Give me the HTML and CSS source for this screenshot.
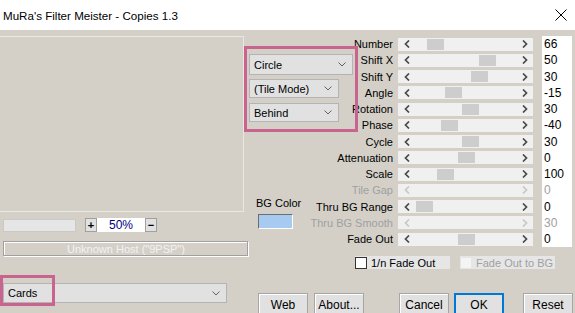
FILE: index.html
```html
<!DOCTYPE html>
<html lang="en">
<head>
    <meta charset="UTF-8">
    <title>MuRa's Filter Meister - Copies 1.3</title>
    <link rel="stylesheet" href="styles.css">
</head>
<body>
    <div class="window">
        <div class="titlebar">
            <span class="title">MuRa's Filter Meister - Copies 1.3</span>
            <svg class="close" viewBox="0 0 12 12"><path d="M0.5 0.5L11.5 11.5M11.5 0.5L0.5 11.5"/></svg>
        </div>

        <div class="client">
            <div class="upper">
                <!-- preview + zoom -->
                <div class="left">
                    <div class="preview"></div>
                    <div class="zoom-row">
                        <div class="progress"></div>
                        <span class="zbtn">+</span>
                        <span class="zoom-val">50%</span>
                        <span class="zbtn">&minus;</span>
                    </div>
                    <div class="host">Unknown Host ("9PSP")</div>
                </div>

                <!-- mode combos -->
                <div class="mid">
                    <div class="combo combo-wide">Circle<svg class="drop" viewBox="0 0 8 5"><path d="M0.5 0.5L4 4L7.5 0.5"/></svg></div>
                    <div class="combo combo-tile">(Tile Mode)<svg class="drop" viewBox="0 0 8 5"><path d="M0.5 0.5L4 4L7.5 0.5"/></svg></div>
                    <div class="combo combo-behind">Behind<svg class="drop" viewBox="0 0 8 5"><path d="M0.5 0.5L4 4L7.5 0.5"/></svg></div>
                    <div class="bg-color">
                        <span class="bg-label">BG Color</span>
                        <div class="swatch"></div>
                    </div>
                </div>

                <!-- sliders -->
                <div class="right">
                    <div class="sliders">
                        <div class="row">
                            <span class="lbl">Number</span>
                            <div class="bar"><span class="arr"><svg class="chev" viewBox="0 0 6 8"><path d="M5 0.5L1.5 4L5 7.5"/></svg></span><div class="track"><span class="thumb" style="margin-left:12px"></span></div><span class="arr"><svg class="chev" viewBox="0 0 6 8"><path d="M1 0.5L4.5 4L1 7.5"/></svg></span></div>
                            <span class="field">66</span>
                        </div>
                        <div class="row">
                            <span class="lbl">Shift X</span>
                            <div class="bar"><span class="arr"><svg class="chev" viewBox="0 0 6 8"><path d="M5 0.5L1.5 4L5 7.5"/></svg></span><div class="track"><span class="thumb" style="margin-left:64px"></span></div><span class="arr"><svg class="chev" viewBox="0 0 6 8"><path d="M1 0.5L4.5 4L1 7.5"/></svg></span></div>
                            <span class="field">50</span>
                        </div>
                        <div class="row">
                            <span class="lbl">Shift Y</span>
                            <div class="bar"><span class="arr"><svg class="chev" viewBox="0 0 6 8"><path d="M5 0.5L1.5 4L5 7.5"/></svg></span><div class="track"><span class="thumb" style="margin-left:56px"></span></div><span class="arr"><svg class="chev" viewBox="0 0 6 8"><path d="M1 0.5L4.5 4L1 7.5"/></svg></span></div>
                            <span class="field">30</span>
                        </div>
                        <div class="row">
                            <span class="lbl">Angle</span>
                            <div class="bar"><span class="arr"><svg class="chev" viewBox="0 0 6 8"><path d="M5 0.5L1.5 4L5 7.5"/></svg></span><div class="track"><span class="thumb" style="margin-left:30px"></span></div><span class="arr"><svg class="chev" viewBox="0 0 6 8"><path d="M1 0.5L4.5 4L1 7.5"/></svg></span></div>
                            <span class="field">-15</span>
                        </div>
                        <div class="row">
                            <span class="lbl">Rotation</span>
                            <div class="bar"><span class="arr"><svg class="chev" viewBox="0 0 6 8"><path d="M5 0.5L1.5 4L5 7.5"/></svg></span><div class="track"><span class="thumb" style="margin-left:47px"></span></div><span class="arr"><svg class="chev" viewBox="0 0 6 8"><path d="M1 0.5L4.5 4L1 7.5"/></svg></span></div>
                            <span class="field">30</span>
                        </div>
                        <div class="row">
                            <span class="lbl">Phase</span>
                            <div class="bar"><span class="arr"><svg class="chev" viewBox="0 0 6 8"><path d="M5 0.5L1.5 4L5 7.5"/></svg></span><div class="track"><span class="thumb" style="margin-left:26px"></span></div><span class="arr"><svg class="chev" viewBox="0 0 6 8"><path d="M1 0.5L4.5 4L1 7.5"/></svg></span></div>
                            <span class="field">-40</span>
                        </div>
                        <div class="row">
                            <span class="lbl">Cycle</span>
                            <div class="bar"><span class="arr"><svg class="chev" viewBox="0 0 6 8"><path d="M5 0.5L1.5 4L5 7.5"/></svg></span><div class="track"><span class="thumb" style="margin-left:47px"></span></div><span class="arr"><svg class="chev" viewBox="0 0 6 8"><path d="M1 0.5L4.5 4L1 7.5"/></svg></span></div>
                            <span class="field">30</span>
                        </div>
                        <div class="row">
                            <span class="lbl">Attenuation</span>
                            <div class="bar"><span class="arr"><svg class="chev" viewBox="0 0 6 8"><path d="M5 0.5L1.5 4L5 7.5"/></svg></span><div class="track"><span class="thumb" style="margin-left:43px"></span></div><span class="arr"><svg class="chev" viewBox="0 0 6 8"><path d="M1 0.5L4.5 4L1 7.5"/></svg></span></div>
                            <span class="field">0</span>
                        </div>
                        <div class="row">
                            <span class="lbl">Scale</span>
                            <div class="bar"><span class="arr"><svg class="chev" viewBox="0 0 6 8"><path d="M5 0.5L1.5 4L5 7.5"/></svg></span><div class="track"><span class="thumb" style="margin-left:22px"></span></div><span class="arr"><svg class="chev" viewBox="0 0 6 8"><path d="M1 0.5L4.5 4L1 7.5"/></svg></span></div>
                            <span class="field">100</span>
                        </div>
                        <div class="row disabled">
                            <span class="lbl">Tile Gap</span>
                            <div class="bar"><span class="arr"><svg class="chev" viewBox="0 0 6 8"><path d="M5 0.5L1.5 4L5 7.5"/></svg></span><div class="track"></div><span class="arr"><svg class="chev" viewBox="0 0 6 8"><path d="M1 0.5L4.5 4L1 7.5"/></svg></span></div>
                            <span class="field">0</span>
                        </div>
                        <div class="row">
                            <span class="lbl">Thru BG Range</span>
                            <div class="bar"><span class="arr"><svg class="chev" viewBox="0 0 6 8"><path d="M5 0.5L1.5 4L5 7.5"/></svg></span><div class="track"><span class="thumb" style="margin-left:1px"></span></div><span class="arr"><svg class="chev" viewBox="0 0 6 8"><path d="M1 0.5L4.5 4L1 7.5"/></svg></span></div>
                            <span class="field">0</span>
                        </div>
                        <div class="row disabled">
                            <span class="lbl">Thru BG Smooth</span>
                            <div class="bar"><span class="arr"><svg class="chev" viewBox="0 0 6 8"><path d="M5 0.5L1.5 4L5 7.5"/></svg></span><div class="track"></div><span class="arr"><svg class="chev" viewBox="0 0 6 8"><path d="M1 0.5L4.5 4L1 7.5"/></svg></span></div>
                            <span class="field">30</span>
                        </div>
                        <div class="row">
                            <span class="lbl">Fade Out</span>
                            <div class="bar"><span class="arr"><svg class="chev" viewBox="0 0 6 8"><path d="M5 0.5L1.5 4L5 7.5"/></svg></span><div class="track"><span class="thumb" style="margin-left:43px"></span></div><span class="arr"><svg class="chev" viewBox="0 0 6 8"><path d="M1 0.5L4.5 4L1 7.5"/></svg></span></div>
                            <span class="field">0</span>
                        </div>
                    </div>

                    <div class="checks">
                        <label class="check"><span class="box"></span>1/n Fade Out</label>
                        <label class="check check-off"><span class="box"></span>Fade Out to BG</label>
                    </div>
                </div>
            </div>

            <div class="lower">
                <div class="combo combo-cards">Cards<svg class="drop" viewBox="0 0 8 5"><path d="M0.5 0.5L4 4L7.5 0.5"/></svg></div>
                <div class="buttons">
                    <span class="btn btn-web">Web</span>
                    <span class="btn btn-about">About...</span>
                    <span class="btn btn-cancel">Cancel</span>
                    <span class="btn btn-ok">OK</span>
                    <span class="btn btn-reset">Reset</span>
                </div>
            </div>

            <!-- highlight marks drawn over the dialog -->
            <div class="mark mark-modes"></div>
            <div class="mark mark-cards"></div>
        </div>
    </div>
</body>
</html>
```

FILE: styles.css
```css
:root {
    --face: #d4d0c8;
    --ctl: #e1e1e1;
    --ctl-border: #b4b4b4;
    --track: #f0f0f0;
    --thumb: #cdcdcd;
    --disabled: #a0a0a0;
    --mark: #c9648f;
}

*, *::before, *::after {
    box-sizing: border-box;
    margin: 0;
    padding: 0;
}

body {
    background: #fff;
    font-family: "Liberation Sans", Arial, sans-serif;
    font-size: 11px;
    color: #000;
}

.window {
    width: 575px;
    height: 313px;
    overflow: hidden;
    display: flex;
    flex-direction: column;
}

/* Title bar */
.titlebar {
    height: 30px;
    flex: none;
    display: flex;
    align-items: center;
    justify-content: space-between;
    padding: 0 8px 0 3px;
    background: #fff;
}
.title {
    font-family: "Liberation Sans", sans-serif;
    font-size: 11.6px;
}
.close {
    width: 12px;
    height: 12px;
    fill: none;
    stroke: #000;
    stroke-width: 1;
}

.client {
    position: relative;
    flex: 1;
    background: var(--face);
}

.upper {
    display: flex;
    height: 253px;
    padding-top: 6px;
}

/* Left column */
.left {
    width: 249px;
    flex: none;
}
.preview {
    width: 244px;
    height: 176px;
    border: 1px solid #e9e7e2;
    border-left: none;
}
.zoom-row {
    display: flex;
    align-items: center;
    height: 14px;
    margin-top: 6px;
    padding-left: 3px;
}
.progress {
    width: 73px;
    height: 13px;
    background: #e6e6e6;
    border: 1px solid #c9c9c9;
}
.zbtn {
    width: 12px;
    height: 14px;
    margin-left: 9px;
    background: var(--ctl);
    border: 1px solid #a0a0a0;
    display: flex;
    align-items: center;
    justify-content: center;
    font-weight: bold;
    font-size: 11px;
    line-height: 1;
}
.zoom-val + .zbtn { margin-left: 0; }
.zoom-val {
    width: 48px;
    height: 14px;
    background: #fff;
    color: #000080;
    font-size: 12px;
    text-align: center;
    line-height: 14px;
}
.host {
    width: 246px;
    height: 16px;
    margin: 9px 0 0 3px;
    border: 1px solid #a0a0a0;
    border-right-color: #fff;
    border-bottom-color: #fff;
    box-shadow: inset -1px -1px 0 #a0a0a0, inset 1px 1px 0 #fff;
    color: #f2f2f2;
    text-align: center;
    line-height: 14px;
}

/* Middle column */
.mid {
    width: 106px;
    flex: none;
    display: flex;
    flex-direction: column;
    align-items: flex-start;
}
.combo {
    display: flex;
    align-items: center;
    justify-content: space-between;
    background: var(--ctl);
    border: 1px solid var(--ctl-border);
    padding: 0 6px 0 4px;
}
.drop {
    width: 8px;
    height: 5px;
    fill: none;
    stroke: #606060;
    stroke-width: 1;
}
.combo-wide {
    width: 104px;
    height: 21px;
    margin-top: 18px;
}
.combo-tile {
    width: 90px;
    height: 19px;
    margin-top: 4px;
}
.combo-behind {
    width: 90px;
    height: 19px;
    margin-top: 5px;
}
.bg-color {
    margin-top: 75px;
    padding-left: 7px;
    display: flex;
    flex-direction: column;
}
.bg-label {
    line-height: 13px;
}
.swatch {
    width: 35px;
    height: 15px;
    margin: 4px 0 0 2px;
    background: #a6caf0;
    border: 1px solid #fff;
    border-top-color: #6d6d6d;
    border-left-color: #6d6d6d;
}

/* Slider rows */
.right {
    flex: 1;
}
.row {
    display: flex;
    align-items: center;
    height: 16.25px;
}
.lbl {
    width: 38px;
    display: flex;
    justify-content: flex-end;
    white-space: nowrap;
}
.bar {
    width: 135px;
    height: 13px;
    margin-left: 5px;
    display: flex;
    background: var(--track);
}
.arr {
    width: 17px;
    display: flex;
    align-items: center;
    justify-content: center;
}
.chev {
    width: 6px;
    height: 8px;
    fill: none;
    stroke: #4a4a4a;
    stroke-width: 1.7;
}
.track {
    flex: 1;
    display: flex;
    align-items: center;
}
.thumb {
    width: 17px;
    height: 11px;
    background: var(--thumb);
}
.field {
    width: 30px;
    height: 16.25px;
    margin-left: 9px;
    background: #fff;
    font-size: 12px;
    line-height: 16px;
    padding-left: 2px;
}
.disabled .lbl,
.disabled .field { color: var(--disabled); }
.disabled .chev { stroke: #c8c8c8; }

/* Check boxes */
.checks {
    display: flex;
    margin-top: 9px;
}
.check {
    width: 95px;
    height: 13px;
    display: flex;
    align-items: center;
    background: #e6e6e6;
}
.box {
    width: 12px;
    height: 12px;
    margin-right: 4px;
    background: #fff;
    border: 1px solid #333;
}
.check-off {
    margin-left: 10px;
    color: var(--disabled);
}
.check-off .box {
    background: #f4f4f4;
    border-color: #e6e6e6;
}

/* Bottom row */
.lower {
    display: flex;
    align-items: flex-start;
    height: 30px;
}
.combo-cards {
    width: 224px;
    height: 20px;
    margin-left: 3px;
}
.buttons {
    display: flex;
    margin-top: 10px;
}
.btn {
    width: 50px;
    height: 24px;
    display: flex;
    align-items: center;
    justify-content: center;
    background: #e1e1e1;
    border: 1px solid #a6a6a6;
    box-shadow: inset 1px 1px 0 #fff;
    font-size: 12px;
}
.btn-web { margin-left: 31px; }
.btn-about { margin-left: 6px; }
.btn-cancel { margin-left: 35px; }
.btn-ok {
    margin-left: 5px;
    border: 2px solid #0078d7;
    box-shadow: none;
}
.btn-reset { margin-left: 19px; }

/* Highlight rectangles */
.mark {
    position: absolute;
    border: 3px solid var(--mark);
}
.mark-modes {
    left: 244px;
    top: 16px;
    width: 114px;
    height: 86px;
}
.mark-cards {
    left: 0;
    top: 245px;
    width: 55px;
    height: 31px;
}
```
